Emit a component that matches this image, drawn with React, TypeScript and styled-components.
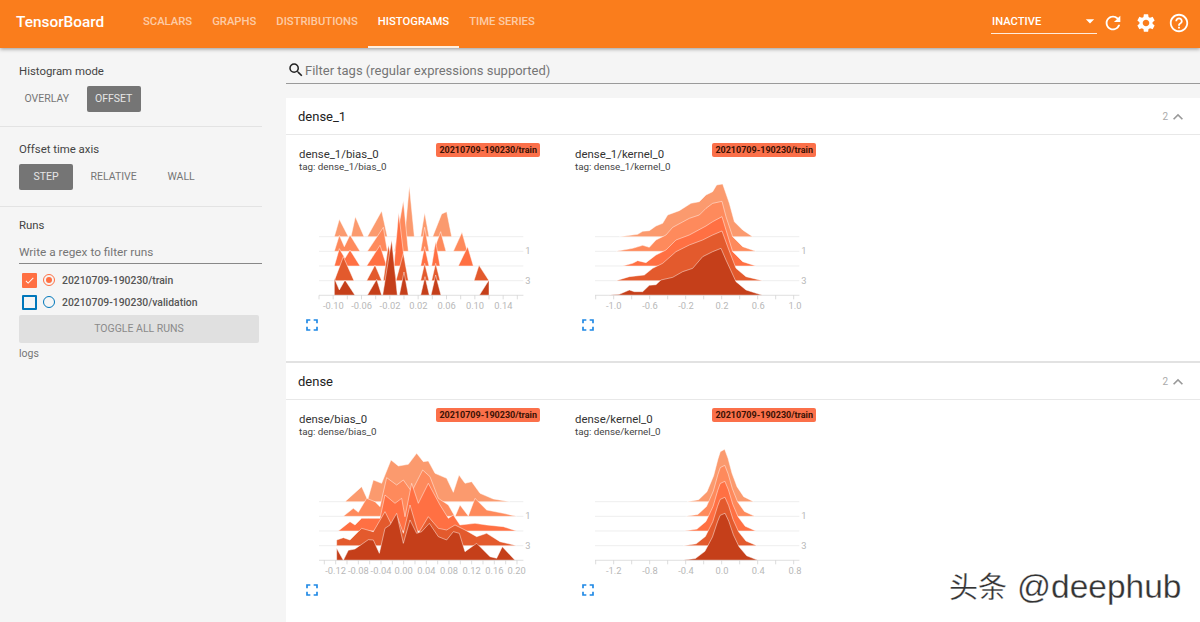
import React from "react";
import styled, { createGlobalStyle } from "styled-components";
import { MdSearch, MdRefresh, MdSettings, MdHelpOutline, MdExpandLess, MdFullscreen, MdArrowDropDown, MdCheck } from "react-icons/md";

const Global = createGlobalStyle`
  html, body { margin: 0; padding: 0; height: 622px; overflow: hidden; background: #f5f5f5; }
  body { font-family: Roboto, "Liberation Sans", sans-serif; }
  * { box-sizing: border-box; }
`;

const Page = styled.div`
  position: relative;
  width: 1200px;
  height: 622px;
  display: flex;
  flex-direction: column;
  overflow: hidden;
`;
const Header = styled.header`
  position: relative;
  z-index: 2;
  flex: 0 0 48px;
  height: 48px;
  display: flex;
  align-items: stretch;
  background: #fa7d1c;
  color: #fff;
  box-shadow: 0 1px 4px rgba(0, 0, 0, 0.4);
  padding-left: 16px;
`;
const Brand = styled.div`
  font-size: 15.4px;
  font-weight: 500;
  line-height: 45px;
  width: 117px;
`;
const Tabs = styled.nav`
  display: flex;
  align-items: stretch;
`;
const Tab = styled.div<{ $active?: boolean }>`
  padding: 0 10px;
  font-size: 11.25px;
  font-weight: 500;
  line-height: 44px;
  color: ${(p) => (p.$active ? "#fff" : "rgba(255,255,255,0.62)")};
  border-bottom: 2px solid ${(p) => (p.$active ? "#fff0e0" : "transparent")};
`;
const Tools = styled.div`
  margin-left: auto;
  display: flex;
  align-items: center;
  padding-right: 5px;
  padding-bottom: 2px;
`;
const Reload = styled.div`
  position: relative;
  width: 106px;
  height: 24px;
  margin-top: -2px;
  margin-right: -1px;
  border-bottom: 1px solid rgba(255, 255, 255, 0.85);
  font-size: 11.2px;
  font-weight: 500;
  line-height: 24px;
  padding-left: 1px;
  display: flex;
  justify-content: space-between;
  svg { margin-top: 1px; margin-right: -3px; }
`;
const ToolIcon = styled.div`
  width: 33px;
  display: flex;
  justify-content: center;
`;

const Body = styled.div`
  flex: 1;
  display: flex;
  min-height: 0;
`;
const Side = styled.aside`
  flex: 0 0 262px;
  width: 262px;
`;
const Section = styled.section<{ $h: number; $pad: number }>`
  height: ${(p) => p.$h}px;
  border-bottom: 1px solid #e3e3e3;
  padding: ${(p) => p.$pad}px 0 0 19px;
  &:last-child { border-bottom: 0; }
`;
const SectionTitle = styled.div`
  font-size: 11.4px;
  line-height: 14px;
  color: #444;
`;
const Buttons = styled.div`
  display: flex;
  gap: 12px;
  margin-top: 8px;
`;
const ModeButton = styled.div<{ $on?: boolean }>`
  min-width: 54px;
  height: 26px;
  padding: 0 5.5px;
  border-radius: 2px;
  font-size: 10.5px;
  line-height: 26px;
  text-align: center;
  color: ${(p) => (p.$on ? "#e6e6e6" : "#757575")};
  background: ${(p) => (p.$on ? "#757575" : "transparent")};
`;
const RunFilter = styled.div`
  width: 243px;
  height: 23px;
  margin-top: 9px;
  border-bottom: 1px solid #888;
  font-size: 11.8px;
  line-height: 22px;
  color: #757575;
`;
const RunRow = styled.div`
  height: 22px;
  display: flex;
  align-items: center;
  font-size: 10.4px;
  font-weight: 500;
  color: #555;
  padding-left: 3px;
`;
const RunList = styled.div`
  margin-top: 5px;
`;
const Check = styled.div<{ $color: string; $on?: boolean }>`
  width: 15px;
  height: 15px;
  border: 2px solid ${(p) => p.$color};
  background: ${(p) => (p.$on ? p.$color : "transparent")};
  border-radius: 1px;
  color: #fff;
  display: flex;
  align-items: center;
  justify-content: center;
`;
const Radio = styled.div<{ $color: string; $on?: boolean }>`
  width: 12px;
  height: 12px;
  margin: 0 7px 0 6px;
  border: 1.5px solid ${(p) => p.$color};
  border-radius: 50%;
  display: flex;
  align-items: center;
  justify-content: center;
  &::after {
    content: "";
    display: ${(p) => (p.$on ? "block" : "none")};
    width: 6px;
    height: 6px;
    border-radius: 50%;
    background: ${(p) => p.$color};
  }
`;
const Toggle = styled.div`
  width: 240px;
  height: 28px;
  margin-top: 2px;
  border-radius: 2px;
  background: #e0e0e0;
  color: #8a8a8a;
  font-size: 10.5px;
  line-height: 28px;
  text-align: center;
`;
const Logs = styled.div`
  margin-top: 4px;
  font-size: 10.5px;
  line-height: 14px;
  color: #757575;
`;

const Main = styled.main`
  flex: 1;
  min-width: 0;
  padding-left: 24px;
`;
const FilterBar = styled.div`
  height: 27px;
  margin-top: 9px;
  margin-bottom: 14px;
  border-bottom: 1px solid #9a9a9a;
  display: flex;
  align-items: center;
  padding-left: 1px;
  font-size: 13px;
  color: #757575;
  gap: 0;
  svg { color: #222; }
`;
const Card = styled.section`
  height: 265px;
  background: #fff;
  border-bottom: 2px solid #e2e2e2;
`;
const CardHead = styled.div`
  height: 37px;
  border-bottom: 1px solid #e8e8e8;
  padding: 1px 12px 0;
  display: flex;
  align-items: center;
  font-size: 13px;
  color: #212121;
`;
const Count = styled.span`
  margin-left: auto;
  font-size: 10px;
  color: #aaa;
`;
const Chevron = styled.span`
  display: flex;
  color: #999;
`;
const Grid = styled.div`
  display: grid;
  grid-template-columns: repeat(2, 276px);
  padding-left: 13px;
`;
const Tile = styled.div`
  position: relative;
  width: 241px;
  padding-top: 13px;
`;
const TileTitle = styled.div`
  font-size: 11.4px;
  line-height: 13px;
  color: #333;
`;
const TileTag = styled.div`
  font-size: 9.8px;
  line-height: 12px;
  color: #444;
`;
const Badge = styled.div`
  position: absolute;
  top: 8px;
  right: 0;
  height: 14px;
  padding: 0 3px;
  border-radius: 2px;
  background: #fb704a;
  color: #3a1205;
  font-size: 9px;
  font-weight: 700;
  line-height: 14px;
`;
const ChartBox = styled.svg`
  display: block;
  margin-top: 7px;
`;
const Expand = styled.div`
  display: flex;
  margin: 2px 0 0 3px;
  color: #1e88e5;
`;
const Watermark = styled.div`
  position: absolute;
  left: 949px;
  top: 568px;
  z-index: 3;
  font-family: "Liberation Sans", "Noto Sans CJK SC", sans-serif;
  font-size: 29px;
  line-height: 38px;
  color: #333;
  white-space: nowrap;
  display: flex;
  align-items: baseline;
  gap: 10px;
  -webkit-text-stroke: 0.3px #fff;
  text-shadow: 1px 1px 0 #fff;
`;
const WatermarkName = styled.span`
  font-size: 33.5px;
`;

const COLORS = ["#fb9a6e", "#fe8a5c", "#ff7043", "#e35a2d", "#c53f1a"];
const BASES = [290, 334, 378, 422, 466];

type Row = string[];
type ChartData = {
  rows: Row[];
  ticks: number[];
  labels: [string, number][];
};

const rng = (a: number, step: number, b: number) => {
  const out: number[] = [];
  for (let x = a; x <= b; x += step) out.push(x);
  return out;
};

const bell = (i: number) => {
  const shape = [[-105, 0], [-70, -6], [-45, -30], [-25, -78], [-12, -128], [-5, -150], [8, -157], [18, -130], [30, -85], [45, -45], [65, -15], [95, 0]];
  const sx = 1 + 0.035 * i;
  const sy = 1 - 0.025 * i;
  return [shape.map(([x, y]) => `${468 + x * sx},${BASES[i] + y * sy}`).join(" ")];
};

const CHARTS: Record<string, ChartData> = {
  a: {
    rows: [
      ["133,290 148,238 175,290", "183,290 196,230 222,290", "232,290 275,213 292,290", "344,290 358,138 373,290", "392,290 404,218 417,290", "428,290 455,222 470,215 485,290"],
      ["133,334 148,286 163,320 180,285 210,334", "232,334 280,262 292,334", "313,334 340,182 355,334", "392,334 404,262 417,334", "430,334 452,275 468,334", "490,334 516,277 532,334"],
      ["133,378 148,326 165,355 180,330 210,378", "230,378 270,316 290,378", "312,378 326,218 345,378", "392,378 404,320 417,378", "425,378 437,305 450,378", "505,378 533,320 550,378"],
      ["133,422 160,350 192,422", "230,422 255,375 275,422", "280,422 295,315 320,422", "318,422 340,340 355,422", "392,422 404,370 417,422", "425,422 437,370 450,422", "552,422 567,376 597,422"],
      ["133,466 133,415 148,450 165,420 195,466", "232,466 260,418 275,466", "278,466 305,300 322,466", "328,466 342,396 355,466", "392,466 405,410 418,466", "423,466 437,405 453,466", "568,466 597,420 597,466"],
    ],
    ticks: rng(87, 42.5, 700),
    labels: [["-0.10", 130], ["-0.06", 215], ["-0.02", 300], ["0.02", 385], ["0.06", 470], ["0.10", 555], ["0.14", 640]],
  },
  b: {
    rows: [
      ["160,290 215,283 230,274 250,272 270,258 290,250 305,225 340,212 375,190 400,185 420,165 440,155 452,135 470,132 490,190 505,245 530,270 560,290"],
      ["150,334 200,325 230,316 250,322 270,300 300,285 320,262 370,235 400,225 420,205 440,190 468,184 480,230 500,290 530,320 570,334"],
      ["170,378 200,370 215,362 240,368 270,345 300,330 330,300 370,285 420,258 440,245 468,230 480,270 500,335 530,365 570,378"],
      ["150,422 190,410 235,405 260,385 290,370 330,335 370,315 410,300 440,285 468,273 485,320 510,385 540,410 590,422"],
      ["125,466 160,463 190,450 205,455 230,455 250,436 270,434 285,420 320,412 350,395 380,385 410,350 440,335 465,325 480,360 510,425 540,450 590,466"],
    ],
    ticks: rng(89, 54, 700),
    labels: [["-1.0", 143], ["-0.6", 252], ["-0.2", 360], ["0.2", 468], ["0.6", 577], ["1.0", 687]],
  },
  c: {
    rows: [
      ["165,290 215,245 233,285 250,225 275,235 303,165 325,183 355,178 380,145 400,170 415,168 435,205 470,220 490,262 507,210 525,235 545,230 570,265 610,282 660,290"],
      ["160,334 190,310 205,322 230,280 255,290 270,305 290,218 320,240 340,225 365,260 398,195 420,215 445,280 475,300 495,335 510,300 535,333 555,280 590,315 640,325 680,334"],
      ["145,378 180,350 195,360 215,340 235,340 270,340 285,270 315,295 335,280 345,335 365,235 385,295 415,235 450,300 475,340 490,330 510,360 555,355 590,360 640,365 680,378"],
      ["140,422 140,405 160,398 180,405 215,370 250,380 285,320 305,360 322,335 340,385 360,300 385,385 415,335 445,370 470,375 495,360 525,375 560,395 590,385 630,410 680,422"],
      ["140,466 140,430 160,466 175,436 195,432 235,404 250,405 268,445 285,370 300,360 320,325 340,415 360,345 380,385 395,380 418,355 445,395 470,405 490,380 508,385 525,440 560,415 600,455 620,460 637,425 675,466"],
    ],
    ticks: rng(103, 34, 700),
    labels: [["-0.12", 137], ["-0.08", 205], ["-0.04", 273], ["0.00", 341], ["0.04", 409], ["0.08", 477], ["0.12", 545], ["0.16", 613], ["0.20", 680]],
  },
  d: {
    rows: [bell(0), bell(1), bell(2), bell(3), bell(4)],
    ticks: rng(89, 54, 700),
    labels: [["-1.2", 143], ["-0.8", 252], ["-0.4", 360], ["0.0", 468], ["0.4", 577], ["0.8", 687]],
  },
};

const OffsetChart = ({ id }: { id: string }) => {
  const c = CHARTS[id];
  return (
    <ChartBox width={233.33} height={133.33} viewBox="27 120 700 400">
      {BASES.map((y) => (
        <line key={y} x1={87} x2={700} y1={y} y2={y} stroke="#e6e6e6" strokeWidth={2} />
      ))}
      {c.rows.map((row, i) =>
        row.map((pts, j) => (
          <polygon key={`${i}-${j}`} points={pts} fill={COLORS[i]} stroke="rgba(255,255,255,0.7)" strokeWidth={2} />
        ))
      )}
      <line x1={87} x2={700} y1={466} y2={466} stroke="#ddd" strokeWidth={2} />
      {c.ticks.map((x) => (
        <line key={x} x1={x} x2={x} y1={466} y2={478} stroke="#ccc" strokeWidth={2} />
      ))}
      {c.labels.map(([t, x]) => (
        <text key={t} x={x} y={508} textAnchor="middle" fontSize={28} fill="#b8b8b8" fontFamily="Roboto, sans-serif">{t}</text>
      ))}
      <text x={714} y={343} textAnchor="middle" fontSize={28} fill="#b8b8b8" fontFamily="Roboto, sans-serif">1</text>
      <text x={714} y={433} textAnchor="middle" fontSize={28} fill="#b8b8b8" fontFamily="Roboto, sans-serif">3</text>
    </ChartBox>
  );
};

const HistTile = ({ name, id }: { name: string; id: string }) => (
  <Tile>
    <TileTitle>{name}</TileTitle>
    <TileTag>tag: {name}</TileTag>
    <Badge>20210709-190230/train</Badge>
    <OffsetChart id={id} />
    <Expand><MdFullscreen size={20} /></Expand>
  </Tile>
);

const TagCard = ({ title, a, b }: { title: string; a: [string, string]; b: [string, string] }) => (
  <Card>
    <CardHead>
      {title}
      <Count>2</Count>
      <Chevron><MdExpandLess size={20} /></Chevron>
    </CardHead>
    <Grid>
      <HistTile name={a[0]} id={a[1]} />
      <HistTile name={b[0]} id={b[1]} />
    </Grid>
  </Card>
);

export default function App() {
  return (
    <Page>
      <Global />
      <Header>
        <Brand>TensorBoard</Brand>
        <Tabs>
          <Tab>SCALARS</Tab>
          <Tab>GRAPHS</Tab>
          <Tab>DISTRIBUTIONS</Tab>
          <Tab $active>HISTOGRAMS</Tab>
          <Tab>TIME SERIES</Tab>
        </Tabs>
        <Tools>
          <Reload>INACTIVE<MdArrowDropDown size={20} /></Reload>
          <ToolIcon><MdRefresh size={22} /></ToolIcon>
          <ToolIcon><MdSettings size={22} /></ToolIcon>
          <ToolIcon><MdHelpOutline size={22} /></ToolIcon>
        </Tools>
      </Header>
      <Body>
        <Side>
          <Section $h={79} $pad={16}>
            <SectionTitle>Histogram mode</SectionTitle>
            <Buttons>
              <ModeButton>OVERLAY</ModeButton>
              <ModeButton $on>OFFSET</ModeButton>
            </Buttons>
          </Section>
          <Section $h={80} $pad={15}>
            <SectionTitle>Offset time axis</SectionTitle>
            <Buttons>
              <ModeButton $on>STEP</ModeButton>
              <ModeButton>RELATIVE</ModeButton>
              <ModeButton>WALL</ModeButton>
            </Buttons>
          </Section>
          <Section $h={300} $pad={11}>
            <SectionTitle>Runs</SectionTitle>
            <RunFilter>Write a regex to filter runs</RunFilter>
            <RunList>
              <RunRow>
                <Check $color="#ff7043" $on><MdCheck size={17} /></Check>
                <Radio $color="#ff7043" $on />
                20210709-190230/train
              </RunRow>
              <RunRow>
                <Check $color="#0077bb" />
                <Radio $color="#0077bb" />
                20210709-190230/validation
              </RunRow>
            </RunList>
            <Toggle>TOGGLE ALL RUNS</Toggle>
            <Logs>logs</Logs>
          </Section>
        </Side>
        <Main>
          <FilterBar><MdSearch size={18} />Filter tags (regular expressions supported)</FilterBar>
          <TagCard title="dense_1" a={["dense_1/bias_0", "a"]} b={["dense_1/kernel_0", "b"]} />
          <TagCard title="dense" a={["dense/bias_0", "c"]} b={["dense/kernel_0", "d"]} />
        </Main>
      </Body>
      <Watermark><span>头条</span><WatermarkName>@deephub</WatermarkName></Watermark>
    </Page>
  );
}
